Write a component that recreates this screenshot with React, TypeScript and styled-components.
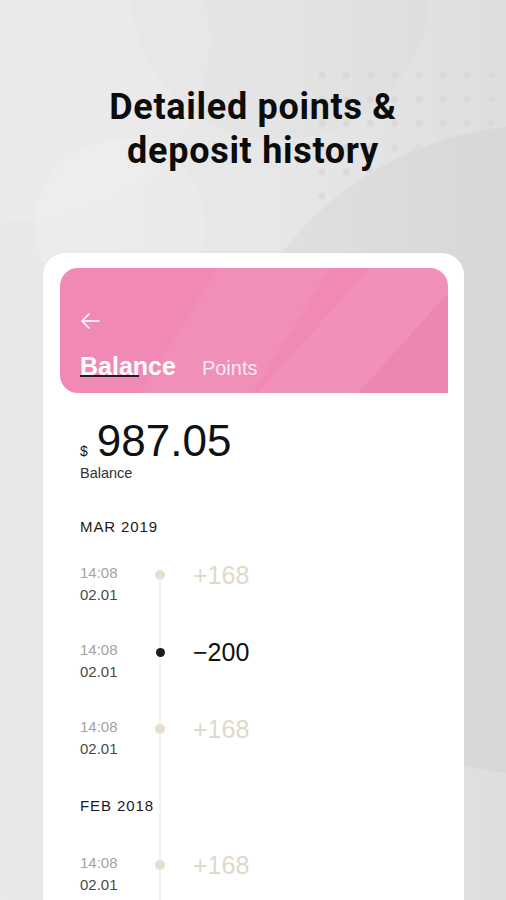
import React from "react";
import styled, { createGlobalStyle } from "styled-components";

const GlobalStyle = createGlobalStyle`
  html, body { margin: 0; padding: 0; }
  body { background: #e8e8e8; font-family: "Liberation Sans", Arial, sans-serif; }
`;

const Page = styled.div`
  position: relative;
  width: 506px;
  height: 900px;
  overflow: hidden;
  background: linear-gradient(90deg, #e9e9e9 0%, #e7e7e7 55%, #dedede 100%);
`;

const Backdrop = styled.div`
  position: absolute;
  inset: 0;
  pointer-events: none;
  overflow: hidden;
`;

const Blob = styled.div<{ $x: number; $y: number; $size: number; $color: string }>`
  position: absolute;
  left: ${(p) => p.$x}px;
  top: ${(p) => p.$y}px;
  width: ${(p) => p.$size}px;
  height: ${(p) => p.$size}px;
  border-radius: 50%;
  background: ${(p) => p.$color};
`;

const DotGrid = styled.div`
  position: absolute;
  left: 310px;
  top: 63px;
  width: 196px;
  height: 170px;
  background-image: radial-gradient(circle, #d9d9d9 3px, transparent 3.7px);
  background-size: 24.2px 24.2px;
  -webkit-mask-image: radial-gradient(circle 325px at 230px 387px, transparent 325px, #000 326px);
  mask-image: radial-gradient(circle 325px at 230px 387px, transparent 325px, #000 326px);
`;

const Content = styled.div`
  position: relative;
  display: flex;
  flex-direction: column;
  align-items: stretch;
`;

const Title = styled.h1`
  margin: 0;
  padding-top: 85px;
  text-align: center;
  font-family: Roboto, "Liberation Sans", sans-serif;
  font-weight: 700;
  font-size: 36px;
  letter-spacing: 0.7px;
  line-height: 44px;
  color: #0c0c0c;
`;

const PhoneCard = styled.div`
  margin: 80px 42px 0 43px;
  height: 700px;
  background: #ffffff;
  border-radius: 22px 22px 0 0;
  padding: 15px 16px 0 17px;
  box-shadow: 0 0 3px rgba(0, 0, 0, 0.04);
`;

const Header = styled.div`
  height: 125px;
  box-sizing: border-box;
  border-radius: 18px 18px 0 18px;
  padding: 44px 20px 0 20px;
  background:
    linear-gradient(122deg, rgba(255,255,255,0) 34%, rgba(255,255,255,0.05) 34%, rgba(255,255,255,0.05) 58%, rgba(255,255,255,0) 58%),
    linear-gradient(132deg, rgba(255,255,255,0) 62%, rgba(255,255,255,0.06) 62%, rgba(255,255,255,0.06) 82%, rgba(0,0,0,0.015) 82%),
    #f089b5;
  display: flex;
  flex-direction: column;
  gap: 21px;
`;

const BackButton = styled.button`
  padding: 0;
  margin: 0;
  border: none;
  background: none;
  width: 20px;
  height: 18px;
  display: flex;
  align-items: center;
  justify-content: flex-start;
  cursor: pointer;
`;

const Tabs = styled.div`
  display: flex;
  align-items: baseline;
  gap: 26px;
`;

const Tab = styled.span<{ $active?: boolean }>`
  position: relative;
  color: ${(p) => (p.$active ? "#ffffff" : "rgba(255,255,255,0.82)")};
  font-size: ${(p) => (p.$active ? "25px" : "20px")};
  font-weight: ${(p) => (p.$active ? 700 : 400)};
  line-height: 30px;
  &::after {
    content: "";
    display: ${(p) => (p.$active ? "block" : "none")};
    position: absolute;
    left: 0;
    top: 24px;
    width: 59px;
    height: 2px;
    background: #2a1a22;
  }
`;

const Body = styled.div`
  padding: 26px 0 0 20px;
  display: flex;
  flex-direction: column;
`;

const AmountRow = styled.div`
  display: flex;
  align-items: baseline;
  gap: 9px;
  color: #111;
`;

const Currency = styled.span`
  font-size: 14px;
  line-height: 16px;
`;

const Amount = styled.span`
  font-size: 44px;
  line-height: 44px;
`;

const AmountLabel = styled.div`
  margin-top: 3px;
  font-size: 14.5px;
  line-height: 15px;
  color: #333;
`;

const MonthLabel = styled.div<{ $top: number; $bottom: number }>`
  margin-top: ${(p) => p.$top}px;
  margin-bottom: ${(p) => p.$bottom}px;
  font-size: 15px;
  line-height: 18px;
  letter-spacing: 0.9px;
  color: #1a1a1a;
`;

const Timeline = styled.div`
  position: relative;
  display: flex;
  flex-direction: column;
  &::before {
    content: "";
    position: absolute;
    left: 79px;
    top: 13px;
    bottom: -200px;
    width: 2px;
    background: #f5f3f1;
  }
`;

const Row = styled.div`
  position: relative;
  display: grid;
  grid-template-columns: 75px 10px auto;
  align-items: start;
  margin-bottom: 33px;
`;

const Stamp = styled.div`
  display: flex;
  flex-direction: column;
  font-size: 15px;
  line-height: 22px;
`;

const Time = styled.span`
  color: #a3a3a3;
`;

const DateText = styled.span`
  color: #4a4a4a;
`;

const DotCell = styled.div`
  height: 26px;
  display: flex;
  align-items: center;
  justify-content: center;
`;

const Dot = styled.span<{ $dark?: boolean }>`
  width: ${(p) => (p.$dark ? 9 : 10)}px;
  height: ${(p) => (p.$dark ? 9 : 10)}px;
  border-radius: 50%;
  background: ${(p) => (p.$dark ? "#1c1c1c" : "#e8dece")};
`;

const Value = styled.span<{ $dark?: boolean }>`
  margin-left: 28px;
  font-size: 25px;
  line-height: 26px;
  color: ${(p) => (p.$dark ? "#111111" : "#e2d8c8")};
`;

type Entry = { time: string; date: string; value: string; negative?: boolean };

const mar: Entry[] = [
  { time: "14:08", date: "02.01", value: "+168" },
  { time: "14:08", date: "02.01", value: "−200", negative: true },
  { time: "14:08", date: "02.01", value: "+168" },
];

const feb: Entry[] = [{ time: "14:08", date: "02.01", value: "+168" }];

const EntryRow = ({ e }: { e: Entry }) => (
  <Row>
    <Stamp>
      <Time>{e.time}</Time>
      <DateText>{e.date}</DateText>
    </Stamp>
    <DotCell>
      <Dot $dark={e.negative} />
    </DotCell>
    <Value $dark={e.negative}>{e.value}</Value>
  </Row>
);

export default function App() {
  return (
    <>
      <GlobalStyle />
      <Page>
        <Backdrop>
          <Blob $x={-150} $y={-140} $size={360} $color="rgba(255,255,255,0.12)" />
          <Blob $x={130} $y={-160} $size={300} $color="rgba(0,0,0,0.012)" />
          <Blob $x={35} $y={140} $size={170} $color="rgba(255,255,255,0.14)" />
          <Blob $x={215} $y={125} $size={650} $color="rgba(0,0,0,0.028)" />
          <DotGrid />
        </Backdrop>
        <Content>
          <Title>
            Detailed points &amp;
            <br />
            deposit history
          </Title>
          <PhoneCard>
            <Header>
              <BackButton aria-label="Back">
                <svg width="20" height="18" viewBox="0 0 20 18" fill="none">
                  <path d="M19 9H2M9 2L2 9l7 7" stroke="#ffffff" strokeWidth="1.6" strokeLinecap="round" strokeLinejoin="round" />
                </svg>
              </BackButton>
              <Tabs>
                <Tab $active>Balance</Tab>
                <Tab>Points</Tab>
              </Tabs>
            </Header>
            <Body>
              <AmountRow>
                <Currency>$</Currency>
                <Amount>987.05</Amount>
              </AmountRow>
              <AmountLabel>Balance</AmountLabel>
              <MonthLabel $top={37} $bottom={26}>MAR 2019</MonthLabel>
              <Timeline>
                {mar.map((e, i) => (
                  <EntryRow key={i} e={e} />
                ))}
                <MonthLabel $top={4} $bottom={37}>FEB 2018</MonthLabel>
                {feb.map((e, i) => (
                  <EntryRow key={i} e={e} />
                ))}
              </Timeline>
            </Body>
          </PhoneCard>
        </Content>
      </Page>
    </>
  );
}
